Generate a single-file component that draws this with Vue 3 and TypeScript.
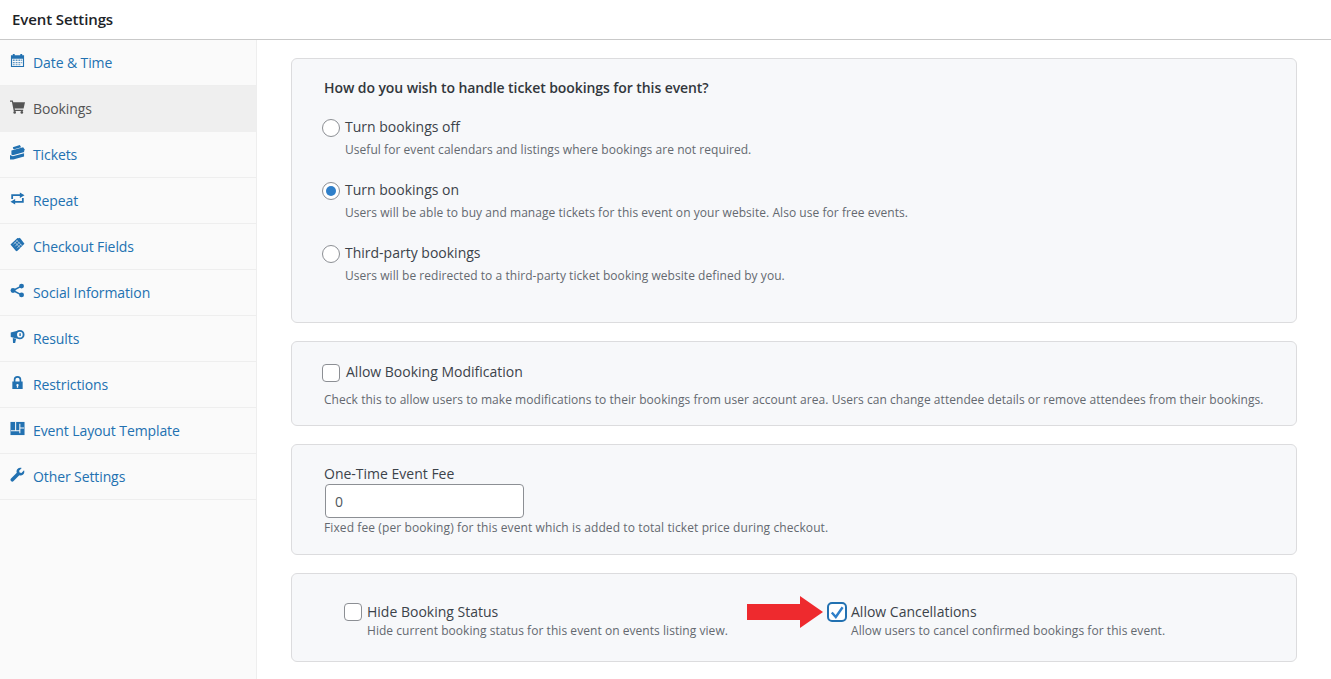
<script setup lang="ts">
interface NavItem { label: string; icon: string; active?: boolean }
const nav: NavItem[] = [
  { label: 'Date & Time', icon: 'calendar' },
  { label: 'Bookings', icon: 'cart', active: true },
  { label: 'Tickets', icon: 'tickets' },
  { label: 'Repeat', icon: 'repeat' },
  { label: 'Checkout Fields', icon: 'tag' },
  { label: 'Social Information', icon: 'share' },
  { label: 'Results', icon: 'bullhorn' },
  { label: 'Restrictions', icon: 'lock' },
  { label: 'Event Layout Template', icon: 'layout' },
  { label: 'Other Settings', icon: 'wrench' },
]
const options = [
  { label: 'Turn bookings off', desc: 'Useful for event calendars and listings where bookings are not required.', on: false },
  { label: 'Turn bookings on', desc: 'Users will be able to buy and manage tickets for this event on your website. Also use for free events.', on: true },
  { label: 'Third-party bookings', desc: 'Users will be redirected to a third-party ticket booking website defined by you.', on: false },
]
</script>

<template>
  <div class="page">
    <header class="topbar">Event Settings</header>
    <div class="body">
      <nav class="side">
        <a v-for="n in nav" :key="n.label" class="item" :class="{ active: n.active }">
          <svg class="ico" viewBox="0 0 16 16" fill="currentColor">
            <template v-if="n.icon === 'calendar'">
              <path fill-rule="evenodd" d="M1 2.500h2V1h2v1.500h6V1h2v1.500h2V15H1zM2.200 6v7.800h11.600V6z" />
              <path opacity=".75" d="M3 7h2v1.500H3zM6 7h2v1.500H6zM9 7h2v1.500H9zM12 7h1v1.500h-1zM3 9.500h2V11H3zM6 9.500h2V11H6zM9 9.500h2V11H9zM12 9.500h1V11h-1zM3 12h2v1H3zM6 12h2v1H6zM9 12h2v1H9z" />
            </template>
            <template v-else-if="n.icon === 'cart'">
              <path d="M0 1.500h3l.5 2H16l-1.500 6.500H5l.3 1.500H14v1.300H4L2 2.800H0z" />
              <circle cx="5" cy="14.300" r="1.400" /><circle cx="12.600" cy="14.300" r="1.400" />
            </template>
            <template v-else-if="n.icon === 'tickets'">
              <path d="M3 2.500 10.500 0l1.300 2.300L4.500 4.600 3.500 4.300zM1.500 5.800 14 2.500l2 2.700-1.200.8.500 1.500L3 11 1.500 10zM0 10.700 3 12l12-3.300v3.500L3.500 15.500H0z" />
            </template>
            <template v-else-if="n.icon === 'repeat'">
              <path d="M2.300 8.500V4.500h9" fill="none" stroke="currentColor" stroke-width="1.900" />
              <path d="M13.700 7.500v4H4.700" fill="none" stroke="currentColor" stroke-width="1.900" />
              <path d="M10.500 1.500 15.500 4.500 10.500 7.500zM5.500 8.500 .5 11.500 5.500 14.500z" />
            </template>
            <template v-else-if="n.icon === 'tag'">
              <path d="M0.500 8 8 1l1.600.3.600-.6 1.200 1.200 4 5.200-7.400 7.600-1.400.6z" />
              <path stroke="#fafafa" stroke-width=".6" d="M3.500 8l4.500-4.500M5.500 10l4.500-4.500M7.500 12l4.500-4.500M5 5.500l6 6M7 3.500l6 6" />
            </template>
            <template v-else-if="n.icon === 'share'">
              <circle cx="3.200" cy="8" r="2.600" /><circle cx="12.300" cy="3.300" r="2.600" /><circle cx="12.300" cy="12.700" r="2.600" />
              <path stroke="currentColor" stroke-width="1.600" d="M3.200 8l9-4.700M3.200 8l9 4.700" />
            </template>
            <template v-else-if="n.icon === 'bullhorn'">
              <path fill-rule="evenodd" d="M10.500 1a5 5 0 1 1 0 10c-.6 0-1-.1-1.500-.3L.8 8.500V3.800L7 2.200A5 5 0 0 1 10.500 1zm0 2a3 3 0 1 0 0 6 3 3 0 0 0 0-6z" />
              <path d="M3 9.500 6.500 10.400 5.500 15H3.200zM10 4.500h1.500v3H10z" />
            </template>
            <template v-else-if="n.icon === 'lock'">
              <path fill-rule="evenodd" d="M4 7V5a4 4 0 0 1 8 0v2h1.500v8h-11V7zm1.800 0h4.400V5a2.200 2.200 0 0 0-4.400 0zM8 9.500a1.200 1.200 0 0 0-.7 2.200V13.500h1.400V11.700A1.200 1.200 0 0 0 8 9.500z" />
            </template>
            <template v-else-if="n.icon === 'layout'">
              <rect x=".5" y="1" width="15" height="14" />
              <path fill="none" stroke="#fafafa" stroke-width="1.100" d="M6 1v9M1 10.500h9.500M10.500 3v10M10.500 7.500H15" />
            </template>
            <template v-else>
              <path d="M15 3.500c.6 1.800.2 3.500-1 4.600-1.100 1-2.700 1.300-4.100.8L3.800 15c-.8.800-1.900.8-2.700 0s-.8-1.900 0-2.700L7.200 6.200C6.700 4.800 7 3.200 8 2.100 9.100 1 10.800.6 12.500 1.100L9.700 3.900l.5 2 2 .4z" />
            </template>
          </svg>
          <span>{{ n.label }}</span>
        </a>
      </nav>
      <main class="main">
        <section class="card c1">
          <h4 class="q">How do you wish to handle ticket bookings for this event?</h4>
          <div v-for="o in options" :key="o.label" class="opt">
            <div class="optline">
              <span class="radio" :class="{ on: o.on }"></span>
              <span class="lbl">{{ o.label }}</span>
            </div>
            <p class="desc indent">{{ o.desc }}</p>
          </div>
        </section>
        <section class="card c2">
          <div class="optline">
            <span class="check"></span>
            <span class="lbl">Allow Booking Modification</span>
          </div>
          <p class="desc">Check this to allow users to make modifications to their bookings from user account area. Users can change attendee details or remove attendees from their bookings.</p>
        </section>
        <section class="card c3">
          <label class="lbl">One-Time Event Fee</label>
          <input class="num" type="text" value="0" />
          <p class="desc">Fixed fee (per booking) for this event which is added to total ticket price during checkout.</p>
        </section>
        <section class="card c4">
          <div class="col first">
            <div class="optline tight">
              <span class="check"></span>
              <span class="lbl">Hide Booking Status</span>
            </div>
            <p class="desc indent2">Hide current booking status for this event on events listing view.</p>
          </div>
          <div class="col second">
            <svg class="arrow" viewBox="0 0 76 33"><path d="M0 8h53V0l23 16L53 32v-8H0z" fill="#ee2a2e" /></svg>
            <div class="optline tight">
              <span class="check checked">
                <svg viewBox="0 0 16 16"><path d="M2.800 8.500 6.800 13 13.600 3.200" fill="none" stroke="#2f7fc9" stroke-width="2.400" /></svg>
              </span>
              <span class="lbl">Allow Cancellations</span>
            </div>
            <p class="desc indent2">Allow users to cancel confirmed bookings for this event.</p>
          </div>
        </section>
      </main>
    </div>
  </div>
</template>

<style>
html, body { margin: 0; background: #fff; }
</style>

<style scoped>
.page {
  height: 679px;
  overflow: hidden;
  font-family: "Open Sans", "Noto Sans", sans-serif;
  color: #3c434a;
  display: flex;
  flex-direction: column;
}
.topbar {
  box-sizing: border-box;
  border-bottom: 1px solid #c9c9c9;
  height: 40px;
  padding: 9px 12px 0;
  font-size: 15px;
  line-height: 20px;
  font-weight: 600;
  color: #1d2327;
  letter-spacing: -0.1px;
}
.body { flex: 1; display: flex; min-height: 0; }
.side {
  width: 257px;
  box-sizing: border-box;
  background: #fafafa;
  border-right: 1px solid #eee;
  flex: none;
}
.item {
  height: 46px;
  box-sizing: border-box;
  border-bottom: 1px solid #eee;
  display: flex;
  align-items: center;
  padding-left: 10px;
  color: #2271b1;
  font-size: 14px;
  letter-spacing: -0.1px;
}
.item.active { background: #efefef; color: #555; border-bottom-color: #efefef; }
.ico { width: 15px; height: 15px; margin-right: 8px; margin-top: -5px; flex: none; }
.main { flex: 1; padding: 18px 34px 0; min-width: 0; }
.card {
  box-sizing: border-box;
  background: #f7f8fa;
  border: 1px solid #dcdcde;
  border-radius: 6px;
  padding-left: 32px;
}
.c1 { height: 265px; padding-top: 19px; margin-bottom: 18px; }
.c2 { height: 85px; padding-top: 19px; margin-bottom: 18px; }
.c3 { height: 111px; padding-top: 19px; margin-bottom: 18px; }
.c4 { height: 89px; padding-top: 28px; display: flex; }
.q { margin: 0 0 18px; font-size: 14px; line-height: 20px; font-weight: 600; color: #32373c; letter-spacing: -0.08px; }
.opt { height: 63px; }
.optline { display: flex; align-items: center; height: 22px; margin-left: -2px; }
.tight { height: 20px; margin-left: 0; }
.lbl { font-size: 14px; line-height: 20px; color: #3c434a; letter-spacing: 0; }
.desc { margin: 1px 0 0; font-size: 12px; line-height: 18px; color: #646970; letter-spacing: 0.05px; }
.indent { margin-left: 21px; margin-top: 3px; }
.indent2 { margin-left: 23px; margin-top: 0; }
.c2 .desc { margin-top: 8px; }
.c3 .desc { letter-spacing: 0.1px; }
.radio {
  width: 18px; height: 18px; box-sizing: border-box;
  border: 1px solid #8c8f94; border-radius: 50%; background: #fff;
  margin: 2px 5px 0 0; position: relative; flex: none;
}
.radio.on::after {
  content: ""; position: absolute; left: 3px; top: 3px;
  width: 10px; height: 10px; border-radius: 50%; background: #2f7fc9;
}
.check {
  width: 18px; height: 18px; box-sizing: border-box;
  border: 1px solid #8c8f94; border-radius: 4px; background: #fff;
  margin: 2px 6px 0 0; flex: none;
}
.tight .check { margin: 0 5px 0 0; }
.tight .check.checked {
  width: 20px; height: 20px;
  margin: 0 4px 0 -1px;
  border: 2px solid #2271b1;
  border-radius: 5px;
}
.check.checked svg { display: block; width: 16px; height: 16px; }
.num {
  display: block;
  width: 199px; height: 34px; box-sizing: border-box;
  margin: 0 0 0 1px;
  padding: 0 9px;
  border: 1px solid #8c8f94; border-radius: 4px;
  background: #fff;
  font: 14px "Open Sans", sans-serif;
  color: #50575e;
}
.c3 .lbl { display: block; }
.col { position: relative; }
.first { width: 484px; margin-left: 20px; flex: none; }
.arrow { position: absolute; left: -81px; top: -6px; width: 76px; height: 33px; }
</style>
